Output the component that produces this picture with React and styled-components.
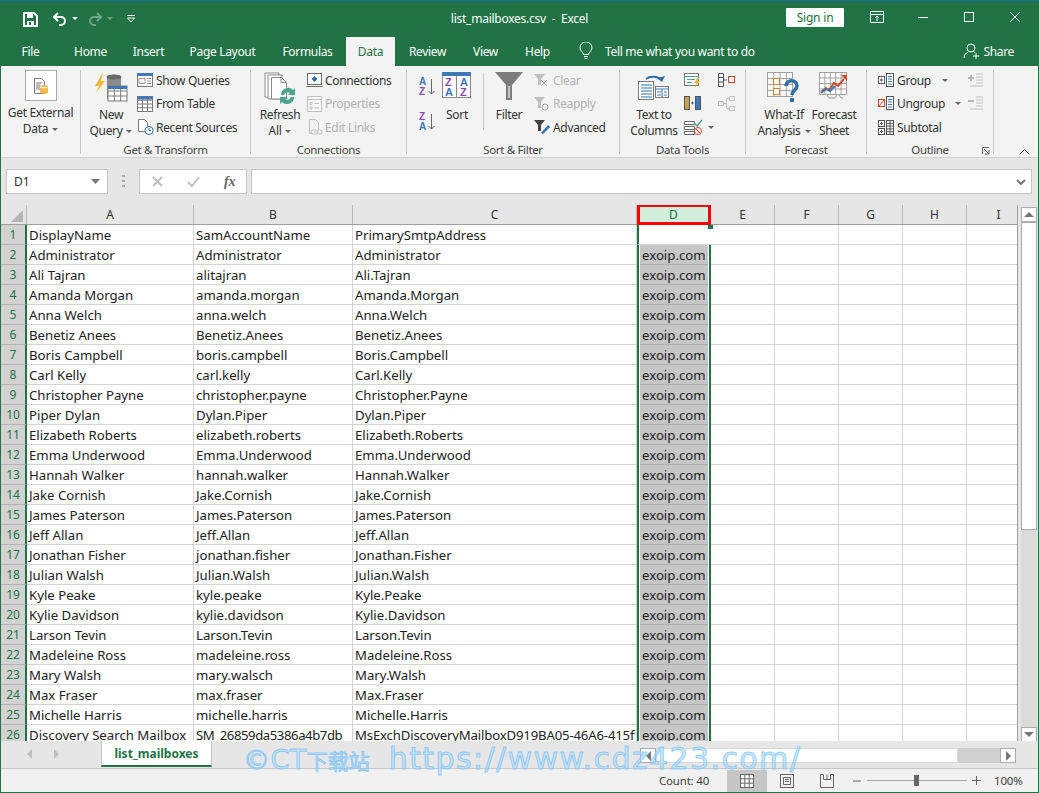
import React from 'react';
import styled, { createGlobalStyle } from 'styled-components';

const GlobalStyle = createGlobalStyle`
  html, body { margin: 0; padding: 0; background: #fff; }
  body { font-family: "Noto Sans", "Open Sans", sans-serif; }
  * { box-sizing: border-box; }
`;

const GREEN = '#217346';

// Window shell
const Window = styled.div`
  position: relative;
  width: 1039px;
  height: 793px;
  display: flex;
  flex-direction: column;
  overflow: hidden;
  border-left: 1px solid ${GREEN};
  border-right: 1px solid ${GREEN};
  border-bottom: 1px solid ${GREEN};
  background: #e6e6e6;
`;

const TitleBar = styled.div`
  height: 37px;
  flex: none;
  display: grid;
  grid-template-columns: 1fr auto 1fr;
  align-items: center;
  background: ${GREEN};
  border-top: 1px solid #1c6aa8;
  color: #fff;
`;

const QuickAccess = styled.div`
  display: flex;
  align-items: center;
  padding-left: 22px;
`;

const QatButton = styled.span`
  display: flex;
  width: ${p => p.$w}px;
  justify-content: flex-start;
  opacity: ${p => (p.$dim ? 0.35 : 1)};
`;

const WindowTitle = styled.div`
  margin-bottom: 2px;
  font-size: 12px;
  letter-spacing: -0.25px;
  white-space: pre;
`;

const WindowControls = styled.div`
  display: flex;
  justify-content: flex-end;
  align-items: center;
  margin-bottom: 4px;
`;

const SignIn = styled.button`
  width: 58px;
  height: 19px;
  margin-right: 10px;
  border: none;
  border-radius: 1px;
  background: #fff;
  color: ${GREEN};
  font: 12px "Noto Sans", sans-serif;
  letter-spacing: -0.2px;
  padding: 0;
`;

const ControlButton = styled.span`
  width: 46px;
  height: 30px;
  display: flex;
  align-items: center;
  justify-content: center;
`;

// Tabs
const TabBar = styled.div`
  height: 29px;
  flex: none;
  display: flex;
  background: ${GREEN};
  color: #fff;
  font-size: 12px;
  letter-spacing: -0.32px;
`;

const Tab = styled.div`
  width: ${p => p.$w}px;
  display: flex;
  align-items: center;
  justify-content: center;
  padding-bottom: 1px;
  background: ${p => (p.$active ? '#f3f3f3' : 'transparent')};
  color: ${p => (p.$active ? GREEN : '#fff')};
`;

const TellMe = styled.div`
  display: flex;
  align-items: center;
  gap: 12px;
  margin-left: 15px;
  padding-bottom: 1px;
`;

const Share = styled.div`
  margin-left: auto;
  margin-right: 24px;
  display: flex;
  align-items: center;
  gap: 4px;
  padding-bottom: 1px;
`;

// Ribbon
const Ribbon = styled.div`
  height: 92px;
  flex: none;
  display: flex;
  padding-top: 4px;
  background: #f3f3f3;
  border-bottom: 1px solid #d2d2d2;
  color: #333;
  font-size: 12px;
  letter-spacing: -0.33px;
`;

const Group = styled.div`
  position: relative;
  width: ${p => p.$w}px;
  height: 84px;
  flex: none;
  display: flex;
  flex-direction: column;
  border-right: 1px solid #c6c6c6;
`;

const GroupBody = styled.div`
  flex: 1;
  display: flex;
  padding-left: ${p => p.$pl || 0}px;
`;

const GroupLabel = styled.div`
  height: 14px;
  margin-bottom: -3px;
  line-height: 14px;
  text-align: center;
  font-size: 11.5px;
  color: #444;
  white-space: nowrap;
`;

const BigButton = styled.div`
  width: ${p => p.$w}px;
  flex: none;
  display: flex;
  flex-direction: column;
  align-items: center;
  margin-left: ${p => p.$ml || 0}px;
`;

const BigIcon = styled.div`
  height: ${p => p.$h || 37}px;
  display: flex;
  align-items: flex-start;
  justify-content: center;
  padding-top: ${p => p.$pt ?? 2}px;
`;

const BigLabel = styled.div`
  line-height: 16px;
  text-align: center;
  white-space: nowrap;
  color: #333;
`;

const Caret = styled.span`
  display: inline-block;
  width: 0;
  height: 0;
  margin-left: ${p => p.$ml ?? 4}px;
  vertical-align: 2px;
  border-left: 3px solid transparent;
  border-right: 3px solid transparent;
  border-top: 3px solid #666;
`;

const SmallColumn = styled.div`
  width: ${p => (p.$w ? `${p.$w}px` : 'auto')};
  flex: none;
  margin-top: -1px;
  margin-left: ${p => p.$ml || 0}px;
  display: flex;
  flex-direction: column;
`;

const SmallRow = styled.div`
  height: ${p => p.$h || 23.25}px;
  display: flex;
  align-items: center;
  gap: 2px;
  white-space: nowrap;
  color: ${p => (p.$off ? '#b1b1b1' : '#333')};
`;

const VRule = styled.div`
  width: 1px;
  height: 57px;
  margin: 3px 5px 0 8px;
  flex: none;
  background: #c6c6c6;
`;

const Launcher = styled.span`
  position: absolute;
  right: 3px;
  bottom: -1px;
  display: flex;
`;

const Collapse = styled.span`
  margin-left: 25px;
  align-self: flex-end;
  margin-bottom: 2px;
  display: flex;
`;

// Formula bar
const FormulaBar = styled.div`
  height: 47px;
  flex: none;
  display: flex;
  padding: 11px 6px 0 5px;
  background: #e6e6e6;
`;

const NameBox = styled.div`
  width: 102px;
  height: 25px;
  padding: 0 7px;
  display: flex;
  align-items: center;
  justify-content: space-between;
  background: #fff;
  border: 1px solid #c6c6c6;
  color: #333;
  font-size: 12px;
`;

const Grip = styled.span`
  width: 31px;
  height: 25px;
  display: flex;
  align-items: center;
  justify-content: center;
`;

const FxBox = styled.div`
  width: 108px;
  height: 25px;
  display: flex;
  align-items: center;
  gap: 24px;
  padding-left: 12px;
  background: #fff;
  border: 1px solid #c6c6c6;
`;

const FxGlyph = styled.span`
  font: italic bold 14px "Liberation Serif", serif;
  color: #666;
`;

const FormulaInput = styled.div`
  width: 782px;
  height: 25px;
  margin-left: 4px;
  padding-right: 5px;
  display: flex;
  align-items: center;
  justify-content: flex-end;
  background: #fff;
  border: 1px solid #c6c6c6;
`;

// Sheet
const SheetArea = styled.div`
  height: 537px;
  flex: none;
  display: flex;
  overflow: hidden;
`;

const Sheet = styled.div`
  width: 1017px;
  flex: none;
  display: flex;
  flex-direction: column;
  overflow: hidden;
  border-right: 1px solid #9f9f9f;
  border-bottom: 1px solid #9f9f9f;
`;

const COLUMNS = '26px 167px 159px 284px 74px 64px 64px 64px 64px 64px';

const HeaderRow = styled.div`
  height: 20px;
  flex: none;
  display: grid;
  grid-template-columns: ${COLUMNS};
  background: #e6e6e6;
  border-bottom: 1px solid #9f9f9f;
`;

const ColHeader = styled.div`
  position: relative;
  display: flex;
  align-items: center;
  justify-content: center;
  font-size: 12px;
  color: ${p => (p.$sel ? GREEN : '#333')};
  background: ${p => (p.$sel ? '#d2eedd' : 'transparent')};
  border-right: 1px solid ${p => (p.$sel ? 'transparent' : '#b8b8b8')};
`;

// red marker drawn over the selected column header
const HeaderMark = styled.span`
  position: absolute;
  top: -1px;
  left: 0;
  right: -1px;
  bottom: -1px;
  border: 3px solid #f00;
`;

const Corner = styled.div`
  display: flex;
  align-items: flex-end;
  justify-content: flex-end;
  padding: 0 3px 2px 0;
  border-right: 1px solid #b8b8b8;
`;

const Row = styled.div`
  height: 20px;
  flex: none;
  display: grid;
  grid-template-columns: ${COLUMNS};
  background: #fff;
`;

const RowHeader = styled.div`
  display: flex;
  align-items: center;
  justify-content: center;
  background: #d2d2d2;
  border-right: 2px solid ${GREEN};
  border-bottom: 1px solid #b4b4b4;
  color: ${GREEN};
  font-size: 12px;
`;

const Cell = styled.div`
  padding: 1px 0 0 2px;
  border-right: 1px solid #d4d4d4;
  border-bottom: 1px solid #d4d4d4;
  font-size: 13.2px;
  letter-spacing: ${p => p.$ls || 0}px;
  line-height: 19px;
  color: #222;
  white-space: nowrap;
  overflow: hidden;
`;

const SelectedCell = styled.div`
  position: relative;
  padding: 0 1px 0 1px;
  border-left: 2px solid ${GREEN};
  border-right: 2px solid ${GREEN};
  font-size: 13.2px;
  line-height: 20px;
  color: #222;
  white-space: nowrap;
`;

const SelectedFill = styled.div`
  height: 20px;
  padding: 1px 0 0 2px;
  line-height: 19px;
  background: #c6c6c6;
  border-bottom: 1px solid #aeaeae;
`;

const FirstSelectedCell = styled.div`
  position: relative;
  border-left: 2px solid ${GREEN};
  border-bottom: 1px solid #d4d4d4;
`;

const FillHandle = styled.span`
  position: absolute;
  top: 0;
  right: -2px;
  width: 5px;
  height: 4px;
  background: ${GREEN};
`;

const VScroll = styled.div`
  flex: 1;
  display: flex;
  flex-direction: column;
  padding: 2px 0 0 3px;
  background: #e6e6e6;
`;

const VTrack = styled.div`
  width: 16px;
  height: 535px;
  display: flex;
  flex-direction: column;
  background: #dbdbdb;
`;

const ScrollArrow = styled.span`
  width: ${p => p.$w || 16}px;
  height: ${p => p.$h || 15}px;
  flex: none;
  display: flex;
  align-items: center;
  justify-content: center;
  background: #fff;
  border: 1px solid #ababab;
`;

const VThumb = styled.div`
  height: 308px;
  flex: none;
  background: #fff;
  border: 1px solid #ababab;
`;

const Spacer = styled.div`
  flex: 1;
`;

// Sheet tabs
const SheetTabs = styled.div`
  height: 28px;
  flex: none;
  display: flex;
  background: #e6e6e6;
  border-bottom: 1px solid #c6c6c6;
  margin-top: -1px;
`;

const TabNav = styled.div`
  width: 100px;
  height: 25px;
  display: flex;
  align-items: center;
  gap: 22px;
  padding-left: 26px;
`;

const SheetTab = styled.div`
  width: 111px;
  height: 26px;
  flex: none;
  display: flex;
  align-items: center;
  justify-content: center;
  background: #fff;
  border-left: 1px solid #c6c6c6;
  border-right: 1px solid #c6c6c6;
  border-bottom: 2px solid ${GREEN};
  color: ${GREEN};
  font-weight: 700;
  font-size: 12px;
`;

const HScroll = styled.div`
  width: 376px;
  height: 15px;
  margin: 7px 0 0 428px;
  display: flex;
  background: #d0d0d0;
`;

const HThumb = styled.div`
  width: 302px;
  background: #fff;
  border: 1px solid #dadada;
`;

// Status bar
const StatusBar = styled.div`
  flex: 1;
  display: flex;
  align-items: center;
  background: #f1f1f1;
  font-size: 11.5px;
  letter-spacing: -0.2px;
  color: #444;
`;

const Count = styled.span`
  margin-left: 658px;
  width: 68px;
`;

const ViewButton = styled.span`
  width: 40px;
  height: 22px;
  display: flex;
  align-items: center;
  justify-content: center;
  background: ${p => (p.$active ? '#c6c6c6' : 'transparent')};
`;

const ZoomSlider = styled.div`
  display: flex;
  align-items: center;
  margin-left: 6px;
`;

const SliderTrack = styled.div`
  position: relative;
  width: 100px;
  height: 1px;
  margin: 0 5px 0 6px;
  background: #a8a8a8;
`;

const SliderThumb = styled.span`
  position: absolute;
  left: 47px;
  top: -5px;
  width: 5px;
  height: 11px;
  background: #666;
`;

const ZoomValue = styled.span`
  margin-left: 13px;
`;

const Watermark = styled.div`
  position: absolute;
  left: 242px;
  top: 741px;
  font: 30px "DejaVu Sans", "Noto Sans CJK SC", sans-serif;
  letter-spacing: 1.4px;
  white-space: pre;
  color: rgba(175, 220, 252, 0.6);
  -webkit-text-stroke: 1px rgba(125, 195, 250, 0.75);
  pointer-events: none;
`;

const WatermarkBrand = styled.span`
  font-size: 27px;
  letter-spacing: 0.5px;
`;

const WatermarkCjk = styled.span`
  font-size: 21px;
  letter-spacing: 0;
  margin-right: 8px;
`;

// Icons
const Svg = ({ w = 16, h = 16, children }) => (
  <svg width={w} height={h} viewBox={`0 0 ${w} ${h}`} fill="none" style={{ flex: 'none', display: 'block' }}>
    {children}
  </svg>
);

const TableGrid = ({ x, y, w, h, cols, rows, head = '#3f78b5', stroke = '#7a7a7a' }) => {
  const lines = [];
  for (let i = 1; i < cols; i++) lines.push(<path key={`c${i}`} d={`M${x + (w * i) / cols} ${y}v${h}`} stroke={stroke} />);
  for (let i = 1; i < rows; i++) lines.push(<path key={`r${i}`} d={`M${x} ${y + (h * i) / rows}h${w}`} stroke={stroke} />);
  return (
    <g>
      <rect x={x} y={y} width={w} height={h} fill="#fff" stroke={stroke} />
      {lines}
      {head && <rect x={x} y={y} width={w} height={3} fill={head} />}
    </g>
  );
};

const SaveIcon = () => (
  <Svg w={15} h={15}>
    <path d="M1 1h10l3 3v10H1z" stroke="#fff" strokeWidth="2" />
    <path d="M4 2h6v4H4zM4 9h7v5H4z" fill="#fff" />
    <path d="M6 10h2v3H6z" fill={GREEN} />
  </Svg>
);

const UndoIcon = () => (
  <Svg w={15} h={14}>
    <path d="M6 1 2 5l4 4" stroke="#fff" strokeWidth="2" />
    <path d="M2 5h7a4 4 0 0 1 0 8H7" stroke="#fff" strokeWidth="2" />
  </Svg>
);

const RedoIcon = () => (
  <Svg w={15} h={14}>
    <path d="M9 1l4 4-4 4" stroke="#fff" strokeWidth="2" />
    <path d="M13 5H6a4 4 0 0 0 0 8h2" stroke="#fff" strokeWidth="2" />
  </Svg>
);

const TinyCaret = () => (
  <Svg w={6} h={4}>
    <path d="M0 0h6L3 3z" fill="#fff" />
  </Svg>
);

const CustomizeIcon = () => (
  <Svg w={8} h={8}>
    <path d="M0 .5h8" stroke="#fff" />
    <path d="M.5 3h7L4 7z" stroke="#fff" />
  </Svg>
);

const RibbonDisplayIcon = () => (
  <Svg w={14} h={12}>
    <path d="M.5.5h13v11H.5zM.5 3.500h13" stroke="#fff" />
    <path d="M7 10V5M5 7l2-2 2 2" stroke="#fff" />
  </Svg>
);

const MinIcon = () => (
  <Svg w={10} h={10}>
    <path d="M0 5.500h10" stroke="#fff" />
  </Svg>
);

const MaxIcon = () => (
  <Svg w={10} h={10}>
    <rect x=".5" y=".5" width="9" height="9" stroke="#fff" />
  </Svg>
);

const CloseIcon = () => (
  <Svg w={10} h={10}>
    <path d="M0 0l10 10M10 0L0 10" stroke="#fff" />
  </Svg>
);

const BulbIcon = () => (
  <Svg w={14} h={18}>
    <path d="M4.500 12.500C4.300 10 1 9 1 5.800a6 6 0 0 1 12 0c0 3.200-3.300 4.200-3.500 6.700z" stroke="#fff" />
    <path d="M5 14.500h4M5.500 16.500h3" stroke="#fff" />
  </Svg>
);

const ShareIcon = () => (
  <Svg w={16} h={16}>
    <circle cx="8" cy="5" r="4" stroke="#fff" />
    <path d="M1 15c0-3 2-5 4-6M11 9l1 .5" stroke="#fff" />
    <path d="M10 13h6M13 10v6" stroke="#fff" />
  </Svg>
);

const Box = styled.span`
  width: 32px;
  height: 31px;
  display: flex;
  align-items: center;
  justify-content: center;
  background: #fff;
  border: 1px solid #ababab;
`;

const ExternalDataIcon = () => (
  <Box>
    <Svg w={18} h={18}>
      <path d="M2.500 1.500h7l3 3v12h-10z" fill="#fff" stroke="#7a7a7a" />
      <path d="M4 6h6M4 8h4M4 10h4M4 12h4" stroke="#7a7a7a" />
      <path d="M8 9c0-1 8-1 8 0v7c0 1-8 1-8 0z" fill="#f2b84b" />
      <path d="M8 10c1 1 7 1 8 0" stroke="#fff" />
    </Svg>
  </Box>
);

const NewQueryIcon = () => (
  <Svg w={34} h={30}>
    <path d="M9 0 1 14l4 0-3 7L11 9 7 9z" fill="#f5b93f" />
    <path d="M13 5c0-3 14-3 14 0v22H13z" fill="#8a8a8a" />
    <ellipse cx="20" cy="5" rx="7.500" ry="2.500" fill="#6a6a6a" />
    <TableGrid x={14} y={14} w={19} h={15} cols={3} rows={3} head="#3f78b5" />
  </Svg>
);

const ShowQueriesIcon = () => (
  <Svg w={17} h={15}>
    <rect x=".5" y=".5" width="15" height="13" fill="#fff" stroke="#7a7a7a" />
    <rect x="0" y="0" width="16" height="3" fill="#3f78b5" />
    <path d="M10 5.500h4M10 8h4M10 10.500h4M2 5.500h6v5H2z" stroke="#9a9a9a" />
  </Svg>
);

const FromTableIcon = () => (
  <Svg w={17} h={16}>
    <TableGrid x={.5} y={.5} w={15} h={15} cols={3} rows={4} />
  </Svg>
);

const RecentIcon = () => (
  <Svg w={17} h={16}>
    <path d="M1.500.5h6l3 3v9h-9z" fill="#fff" stroke="#7a7a7a" />
    <circle cx="12" cy="11.500" r="4" fill="#fff" stroke="#2f6ea8" />
    <path d="M12 9v2.500h2" stroke="#2f6ea8" />
  </Svg>
);

const RefreshIcon = () => (
  <Svg w={32} h={32}>
    <path d="M1 1h14v24H1z" fill="#fff" stroke="#8a8a8a" />
    <path d="M4 3h14v24H4z" fill="#fff" stroke="#8a8a8a" />
    <path d="M7.500 5.500h10l5 5V27h-15z" fill="#fff" stroke="#8a8a8a" />
    <path d="M17 5.500v5h5" stroke="#8a8a8a" />
    <path d="M17 23a7 7 0 0 1 12-5l2-2v7h-7l2-2a4 4 0 0 0-6 2z" fill="#4ea58d" />
    <path d="M30 25a7 7 0 0 1-12 5l-2 2v-7h7l-2 2a4 4 0 0 0 6-2z" fill="#4ea58d" />
  </Svg>
);

const ConnectionsIcon = () => (
  <Svg w={17} h={15}>
    <rect x="1.500" y=".5" width="14" height="11" fill="#fff" stroke="#6a6a6a" />
    <path d="M.5 13.500h16" stroke="#6a6a6a" />
    <path d="M8.500 3l3 3-3 3-3-3z" fill="#2f6ea8" />
  </Svg>
);

const PropertiesIcon = () => (
  <Svg w={17} h={16}>
    <rect x="1.500" y=".5" width="14" height="15" fill="#f8f8f8" stroke="#c0c0c0" />
    <path d="M1.500 3.500h14M4 6.500h2v2H4zM4 11h2v2H4zM8 7.500h5M8 12h5" stroke="#c0c0c0" />
  </Svg>
);

const EditLinksIcon = () => (
  <Svg w={17} h={16}>
    <path d="M3.500.5h6l3 3v7M3.500.5v14h3" stroke="#c0c0c0" />
    <path d="M8 13h3M7 11h3a2 2 0 0 1 0 4H7a2 2 0 0 1 0-4zM12 11h2a2 2 0 0 1 0 4h-2" stroke="#c0c0c0" />
  </Svg>
);

const SortSmallIcon = ({ top, bottom, topColor, bottomColor }) => (
  <Svg w={16} h={24}>
    <text x="0" y="10" fontSize="10" fontWeight="700" fontFamily="Liberation Sans, sans-serif" fill={topColor}>{top}</text>
    <text x="0" y="20" fontSize="10" fontWeight="700" fontFamily="Liberation Sans, sans-serif" fill={bottomColor}>{bottom}</text>
    <path d="M12.500 4v15M9.500 16l3 3 3-3" stroke="#666" />
  </Svg>
);

const SortIcon = () => (
  <Svg w={30} h={27}>
    <rect x=".5" y=".5" width="28" height="25" fill="#fff" stroke="#8a8a8a" />
    <rect x="0" y="0" width="29" height="4" fill="#3f78b5" />
    <path d="M14.500 4v22" stroke="#8a8a8a" />
    <text x="3" y="14" fontSize="11" fontWeight="700" fontFamily="Liberation Sans, sans-serif" fill="#8a4fb0">Z</text>
    <text x="3" y="24" fontSize="11" fontWeight="700" fontFamily="Liberation Sans, sans-serif" fill="#3f78b5">A</text>
    <text x="18" y="14" fontSize="11" fontWeight="700" fontFamily="Liberation Sans, sans-serif" fill="#3f78b5">A</text>
    <text x="18" y="24" fontSize="11" fontWeight="700" fontFamily="Liberation Sans, sans-serif" fill="#8a4fb0">Z</text>
  </Svg>
);

const FilterIcon = () => (
  <Svg w={28} h={28}>
    <path d="M0 0h28L17 13v15h-6V13z" fill="#7d7d7d" />
    <path d="M13 14h2v12h-2z" fill="#c8c8c8" />
  </Svg>
);

const SmallFilter = ({ color, children }) => (
  <Svg w={17} h={16}>
    <path d="M0 1h11L7 6v6H4V6z" fill={color} />
    {children}
  </Svg>
);

const TextColumnsIcon = () => (
  <Svg w={32} h={28}>
    <path d="M8 7a9 6 0 0 1 15 1" stroke="#2f6ea8" strokeWidth="2" />
    <path d="M19 6l5 4 3-6z" fill="#2f6ea8" />
    <rect x=".5" y="9.500" width="15" height="18" fill="#fff" stroke="#7a7a7a" />
    <path d="M3 13h11M3 16h11M3 19h11M3 22h11M3 25h11" stroke="#2f6ea8" />
    <rect x="17.500" y="14.500" width="13" height="11" fill="#fff" stroke="#7a7a7a" />
    <path d="M17.500 17h13M24 17v8M19 20h4M26 20h3M19 23h4M26 23h3" stroke="#3f78b5" />
  </Svg>
);

const FlashFillIcon = () => (
  <Svg w={17} h={15}>
    <rect x=".5" y=".5" width="14" height="12" fill="#fff" stroke="#7a7a7a" />
    <path d="M.5 3.500h14M3 6.500h8M3 9.500h5" stroke="#4ea58d" />
    <path d="M13 5l-3 5h2l-1 5 5-7h-2l1-3z" fill="#f2b84b" />
  </Svg>
);

const RemoveDupIcon = () => (
  <Svg w={17} h={15}>
    <rect x=".5" y=".5" width="5" height="13" fill="#c8a24a" stroke="#555" />
    <rect x="11.500" y=".5" width="5" height="13" fill="#3f78b5" stroke="#555" />
    <path d="M7 7h3M8.500 5.500v3" stroke="#2f6ea8" />
  </Svg>
);

const ValidationIcon = () => (
  <Svg w={20} h={16}>
    <path d="M.5 2.500h10v3H.5zM.5 7.500h10v3H.5zM.5 12.500h10v3H.5z" fill="#fff" stroke="#666" />
    <path d="M10 4l3 3 5-6" stroke="#4ea58d" strokeWidth="1.500" />
    <circle cx="14" cy="12" r="3.500" fill="#fff" stroke="#d0492a" />
    <path d="M12 10l4 4" stroke="#d0492a" />
  </Svg>
);

const ConsolidateIcon = () => (
  <Svg w={17} h={15}>
    <path d="M.5.5h5v13h-5zM.5 4.500h5M.5 9h5" stroke="#555" />
    <path d="M6 7h3" stroke="#2f6ea8" />
    <rect x="10.500" y="3.500" width="6" height="6" stroke="#d0492a" />
  </Svg>
);

const RelationsIcon = () => (
  <Svg w={17} h={15}>
    <path d="M.5 5.500h5v4h-5zM11.500.5h5v4h-5zM11.500 10.500h5v4h-5zM5.500 7.500h3M8.500 2.500v10M8.500 2.500h3M8.500 12.500h3" stroke="#bdbdbd" />
  </Svg>
);

const WhatIfIcon = () => (
  <Svg w={34} h={32}>
    <TableGrid x={.5} y={.5} w={25} h={24} cols={4} rows={4} head={null} stroke="#a0a0a0" />
    <rect x="6.500" y="6.500" width="6" height="6" fill="#fff" stroke="#d9822b" />
    <rect x="6.500" y="16.500" width="6" height="6" fill="#fff" stroke="#d9822b" />
    <path d="M19 14c0-7 11-7 11 0 0 4-5 4-5 9" stroke="#2f6ea8" strokeWidth="3.500" />
    <rect x="23" y="26" width="4" height="4" fill="#2f6ea8" />
  </Svg>
);

const ForecastIcon = () => (
  <Svg w={30} h={28}>
    <TableGrid x={.5} y={.5} w={27} h={22} cols={5} rows={4} head={null} stroke="#a0a0a0" />
    <path d="M2 20l5-4 3 2 5-7 4 3 6-7" stroke="#d0492a" strokeWidth="2" />
    <path d="M2 21l5-4 4 2 5-5" stroke="#3f78b5" strokeWidth="2" />
    <path d="M22 3h6v6z" fill="#d0492a" />
    <path d="M8 23l2 3h6l2-3M20 23l2 3h2" stroke="#999" />
  </Svg>
);

const GroupIcon = ({ off }) => (
  <Svg w={17} h={15}>
    <rect x=".5" y="3.500" width="6" height="7" fill="#fff" stroke={off ? '#d0492a' : '#555'} />
    {off ? <path d="M1 10l5-6" stroke="#d0492a" /> : <path d="M2 7h3M3.500 5.500v3" stroke="#555" />}
    <rect x="8.500" y=".5" width="7" height="13" fill="#fff" stroke="#555" />
    <path d="M10 3.500h4M10 6h4M10 8.500h4M10 11h4" stroke="#3f78b5" />
  </Svg>
);

const SubtotalIcon = () => (
  <Svg w={17} h={15}>
    <rect x=".5" y=".5" width="6" height="6" fill="#fff" stroke="#555" />
    <rect x=".5" y="8.500" width="6" height="6" fill="#fff" stroke="#555" />
    <path d="M2 3.500h3M3.500 2v3M2 11.500h3M3.500 10v3" stroke="#555" />
    <TableGrid x={8.500} y={.5} w={7} h={14} cols={2} rows={5} head={null} stroke="#555" />
  </Svg>
);

const DetailIcon = ({ minus }) => (
  <Svg w={16} h={15}>
    <path d={minus ? 'M0 5h6' : 'M0 5h6M3 2v6'} stroke="#b5b5b5" strokeWidth="2" />
    <path d="M8 1h7M8 4h7M8 7h7M8 10h7M2 13h13" stroke="#c0c0c0" />
  </Svg>
);

const LauncherIcon = () => (
  <Svg w={8} h={8}>
    <path d="M.5 7V.5H7M2 2l5 5M7 3v4H3" stroke="#666" />
  </Svg>
);

const CollapseIcon = () => (
  <Svg w={11} h={6}>
    <path d="M.5 5.500 5.500.5l5 5" stroke="#666" />
  </Svg>
);

const ChevronDown = ({ color = '#777' }) => (
  <Svg w={10} h={6}>
    <path d="M1 1l4 4 4-4" stroke={color} strokeWidth="2" />
  </Svg>
);

const FieldCaret = () => (
  <Svg w={9} h={5}>
    <path d="M0 0h9L4.500 5z" fill="#777" />
  </Svg>
);

const GripIcon = () => (
  <Svg w={3} h={13}>
    <path d="M0 1h3M0 6h3M0 11h3" stroke="#aaa" strokeWidth="2" />
  </Svg>
);

const CrossIcon = () => (
  <Svg w={11} h={11}>
    <path d="M1 1l9 9M10 1l-9 9" stroke="#c0c0c0" strokeWidth="2" />
  </Svg>
);

const CheckIcon = () => (
  <Svg w={13} h={11}>
    <path d="M1 6l4 4 7-9" stroke="#c0c0c0" strokeWidth="2" />
  </Svg>
);

const CornerIcon = () => (
  <Svg w={12} h={12}>
    <path d="M12 0v12H0z" fill="#b5b5b5" />
  </Svg>
);

const Arrow = ({ dir, color = '#777' }) => {
  const paths = { up: 'M0 5 5 0l5 5z', down: 'M0 0h10L5 5z', left: 'M5 0v10L0 5z', right: 'M0 0v10l5-5z' };
  const vertical = dir === 'up' || dir === 'down';
  return (
    <Svg w={vertical ? 10 : 5} h={vertical ? 5 : 10}>
      <path d={paths[dir]} fill={color} />
    </Svg>
  );
};

const NormalViewIcon = () => (
  <Svg w={14} h={14}>
    <TableGrid x={.5} y={.5} w={13} h={13} cols={3} rows={3} head={null} stroke="#666" />
  </Svg>
);

const PageLayoutIcon = () => (
  <Svg w={14} h={14}>
    <rect x=".5" y=".5" width="13" height="13" stroke="#666" />
    <path d="M3.500 3.500h7v7h-7zM5 5.500h4M5 7.500h4" stroke="#666" />
  </Svg>
);

const PageBreakIcon = () => (
  <Svg w={14} h={14}>
    <path d="M.5.5v13h13V.5M.5.5h3v5h7v-5h3M7 .5v5" stroke="#666" />
  </Svg>
);

const people = [
  ['DisplayName', 'SamAccountName', 'PrimarySmtpAddress'],
  ['Administrator', 'Administrator', 'Administrator'],
  ['Ali Tajran', 'alitajran', 'Ali.Tajran'],
  ['Amanda Morgan', 'amanda.morgan', 'Amanda.Morgan'],
  ['Anna Welch', 'anna.welch', 'Anna.Welch'],
  ['Benetiz Anees', 'Benetiz.Anees', 'Benetiz.Anees'],
  ['Boris Campbell', 'boris.campbell', 'Boris.Campbell'],
  ['Carl Kelly', 'carl.kelly', 'Carl.Kelly'],
  ['Christopher Payne', 'christopher.payne', 'Christopher.Payne'],
  ['Piper Dylan', 'Dylan.Piper', 'Dylan.Piper'],
  ['Elizabeth Roberts', 'elizabeth.roberts', 'Elizabeth.Roberts'],
  ['Emma Underwood', 'Emma.Underwood', 'Emma.Underwood'],
  ['Hannah Walker', 'hannah.walker', 'Hannah.Walker'],
  ['Jake Cornish', 'Jake.Cornish', 'Jake.Cornish'],
  ['James Paterson', 'James.Paterson', 'James.Paterson'],
  ['Jeff Allan', 'Jeff.Allan', 'Jeff.Allan'],
  ['Jonathan Fisher', 'jonathan.fisher', 'Jonathan.Fisher'],
  ['Julian Walsh', 'Julian.Walsh', 'Julian.Walsh'],
  ['Kyle Peake', 'kyle.peake', 'Kyle.Peake'],
  ['Kylie Davidson', 'kylie.davidson', 'Kylie.Davidson'],
  ['Larson Tevin', 'Larson.Tevin', 'Larson.Tevin'],
  ['Madeleine Ross', 'madeleine.ross', 'Madeleine.Ross'],
  ['Mary Walsh', 'mary.walsch', 'Mary.Walsh'],
  ['Max Fraser', 'max.fraser', 'Max.Fraser'],
  ['Michelle Harris', 'michelle.harris', 'Michelle.Harris'],
  ['Discovery Search Mailbox', 'SM_26859da5386a4b7db', 'MsExchDiscoveryMailboxD919BA05-46A6-415f'],
];

// the long ids in the last row need tighter spacing to fit their columns
const LONG_ROW_SPACING = [0, -0.45, -0.18];

const tabs = [
  ['File', 59], ['Home', 61], ['Insert', 55], ['Page Layout', 93], ['Formulas', 77],
  ['Data', 49], ['Review', 65], ['View', 51], ['Help', 53],
];

const App = () => (
  <Window>
    <GlobalStyle />
    <TitleBar>
      <QuickAccess>
        <QatButton $w={29}><SaveIcon /></QatButton>
        <QatButton $w={20}><UndoIcon /></QatButton>
        <QatButton $w={16}><TinyCaret /></QatButton>
        <QatButton $w={19} $dim><RedoIcon /></QatButton>
        <QatButton $w={20} $dim><TinyCaret /></QatButton>
        <QatButton $w={10}><CustomizeIcon /></QatButton>
      </QuickAccess>
      <WindowTitle>list_mailboxes.csv  -  Excel</WindowTitle>
      <WindowControls>
        <SignIn>Sign in</SignIn>
        <ControlButton><RibbonDisplayIcon /></ControlButton>
        <ControlButton><MinIcon /></ControlButton>
        <ControlButton><MaxIcon /></ControlButton>
        <ControlButton><CloseIcon /></ControlButton>
      </WindowControls>
    </TitleBar>

    <TabBar>
      {tabs.map(([name, w]) => (
        <Tab key={name} $w={w} $active={name === 'Data'}>{name}</Tab>
      ))}
      <TellMe><BulbIcon />Tell me what you want to do</TellMe>
      <Share><ShareIcon />Share</Share>
    </TabBar>

    <Ribbon>
      <Group $w={80}>
        <GroupBody>
          <BigButton $w={79}>
            <BigIcon $h={35} $pt={0}><ExternalDataIcon /></BigIcon>
            <BigLabel>Get External<br />Data<Caret /></BigLabel>
          </BigButton>
        </GroupBody>
      </Group>

      <Group $w={170}>
        <GroupBody $pl={6}>
          <BigButton $w={48}>
            <BigIcon><NewQueryIcon /></BigIcon>
            <BigLabel>New<br />Query<Caret /></BigLabel>
          </BigButton>
          <SmallColumn $ml={2}>
            <SmallRow><ShowQueriesIcon />Show Queries</SmallRow>
            <SmallRow><FromTableIcon />From Table</SmallRow>
            <SmallRow><RecentIcon />Recent Sources</SmallRow>
          </SmallColumn>
        </GroupBody>
        <GroupLabel>Get &amp; Transform</GroupLabel>
      </Group>

      <Group $w={156}>
        <GroupBody $pl={5}>
          <BigButton $w={48}>
            <BigIcon><RefreshIcon /></BigIcon>
            <BigLabel>Refresh<br />All<Caret /></BigLabel>
          </BigButton>
          <SmallColumn $ml={2}>
            <SmallRow><ConnectionsIcon />Connections</SmallRow>
            <SmallRow $off><PropertiesIcon />Properties</SmallRow>
            <SmallRow $off><EditLinksIcon />Edit Links</SmallRow>
          </SmallColumn>
        </GroupBody>
        <GroupLabel>Connections</GroupLabel>
      </Group>

      <Group $w={213}>
        <GroupBody $pl={12}>
          <SmallColumn $w={20}>
            <SmallRow $h={35}><SortSmallIcon top="A" bottom="Z" topColor="#3f78b5" bottomColor="#8a4fb0" /></SmallRow>
            <SmallRow $h={35}><SortSmallIcon top="Z" bottom="A" topColor="#8a4fb0" bottomColor="#3f78b5" /></SmallRow>
          </SmallColumn>
          <BigButton $w={36}>
            <BigIcon><SortIcon /></BigIcon>
            <BigLabel>Sort</BigLabel>
          </BigButton>
          <VRule />
          <BigButton $w={40}>
            <BigIcon><FilterIcon /></BigIcon>
            <BigLabel>Filter</BigLabel>
          </BigButton>
          <SmallColumn $ml={5}>
            <SmallRow $off>
              <SmallFilter color="#c0c0c0"><path d="M7 7l6 6M13 7l-6 6" stroke="#a8a8a8" /></SmallFilter>Clear
            </SmallRow>
            <SmallRow $off>
              <SmallFilter color="#c0c0c0"><circle cx="11" cy="11" r="3" stroke="#a8a8a8" /></SmallFilter>Reapply
            </SmallRow>
            <SmallRow>
              <SmallFilter color="#444"><path d="M7 14l7-8 2 2-7 7z" fill="#2f6ea8" /></SmallFilter>Advanced
            </SmallRow>
          </SmallColumn>
        </GroupBody>
        <GroupLabel>Sort &amp; Filter</GroupLabel>
      </Group>

      <Group $w={126}>
        <GroupBody $pl={4}>
          <BigButton $w={60}>
            <BigIcon><TextColumnsIcon /></BigIcon>
            <BigLabel>Text to<br />Columns</BigLabel>
          </BigButton>
          <SmallColumn $w={34}>
            <SmallRow><FlashFillIcon /></SmallRow>
            <SmallRow><RemoveDupIcon /></SmallRow>
            <SmallRow><ValidationIcon /><Caret $ml={2} /></SmallRow>
          </SmallColumn>
          <SmallColumn>
            <SmallRow><ConsolidateIcon /></SmallRow>
            <SmallRow><RelationsIcon /></SmallRow>
          </SmallColumn>
        </GroupBody>
        <GroupLabel>Data Tools</GroupLabel>
      </Group>

      <Group $w={121}>
        <GroupBody $pl={12}>
          <BigButton $w={52}>
            <BigIcon><WhatIfIcon /></BigIcon>
            <BigLabel>What-If<br />Analysis<Caret /></BigLabel>
          </BigButton>
          <BigButton $w={48}>
            <BigIcon><ForecastIcon /></BigIcon>
            <BigLabel>Forecast<br />Sheet</BigLabel>
          </BigButton>
        </GroupBody>
        <GroupLabel>Forecast</GroupLabel>
      </Group>

      <Group $w={127}>
        <GroupBody $pl={11}>
          <SmallColumn $w={90}>
            <SmallRow><GroupIcon />Group<Caret $ml={9} /></SmallRow>
            <SmallRow><GroupIcon off />Ungroup<Caret $ml={8} /></SmallRow>
            <SmallRow><SubtotalIcon />Subtotal</SmallRow>
          </SmallColumn>
          <SmallColumn>
            <SmallRow><DetailIcon /></SmallRow>
            <SmallRow><DetailIcon minus /></SmallRow>
          </SmallColumn>
        </GroupBody>
        <GroupLabel>Outline</GroupLabel>
        <Launcher><LauncherIcon /></Launcher>
      </Group>

      <Collapse><CollapseIcon /></Collapse>
    </Ribbon>

    <FormulaBar>
      <NameBox>D1<FieldCaret /></NameBox>
      <Grip><GripIcon /></Grip>
      <FxBox>
        <CrossIcon />
        <CheckIcon />
        <FxGlyph>fx</FxGlyph>
      </FxBox>
      <FormulaInput><ChevronDown /></FormulaInput>
    </FormulaBar>

    <SheetArea>
      <Sheet>
        <HeaderRow>
          <Corner><CornerIcon /></Corner>
          {['A', 'B', 'C', 'D', 'E', 'F', 'G', 'H', 'I'].map(col => (
            <ColHeader key={col} $sel={col === 'D'}>
              {col}
              {col === 'D' && <HeaderMark />}
            </ColHeader>
          ))}
        </HeaderRow>
        {people.map((person, i) => (
          <Row key={i}>
            <RowHeader>{i + 1}</RowHeader>
            {person.map((value, c) => (
              <Cell key={c} $ls={i === people.length - 1 ? LONG_ROW_SPACING[c] : 0}>{value}</Cell>
            ))}
            {i === 0 ? (
              <FirstSelectedCell><FillHandle /></FirstSelectedCell>
            ) : (
              <SelectedCell><SelectedFill>exoip.com</SelectedFill></SelectedCell>
            )}
            <Cell /><Cell /><Cell /><Cell /><Cell />
          </Row>
        ))}
      </Sheet>
      <VScroll>
        <VTrack>
          <ScrollArrow><Arrow dir="up" /></ScrollArrow>
          <VThumb />
          <Spacer />
          <ScrollArrow><Arrow dir="down" /></ScrollArrow>
        </VTrack>
      </VScroll>
    </SheetArea>

    <SheetTabs>
      <TabNav>
        <Arrow dir="left" color="#c0c0c0" />
        <Arrow dir="right" color="#c0c0c0" />
      </TabNav>
      <SheetTab>list_mailboxes</SheetTab>
      <HScroll>
        <ScrollArrow><Arrow dir="left" /></ScrollArrow>
        <HThumb />
        <Spacer />
        <ScrollArrow><Arrow dir="right" /></ScrollArrow>
      </HScroll>
    </SheetTabs>

    <StatusBar>
      <Count>Count: 40</Count>
      <ViewButton $active><NormalViewIcon /></ViewButton>
      <ViewButton><PageLayoutIcon /></ViewButton>
      <ViewButton><PageBreakIcon /></ViewButton>
      <ZoomSlider>
        <Svg w={8} h={8}><path d="M0 4h8" stroke="#666" /></Svg>
        <SliderTrack><SliderThumb /></SliderTrack>
        <Svg w={9} h={9}><path d="M0 4.500h9M4.500 0v9" stroke="#666" /></Svg>
      </ZoomSlider>
      <ZoomValue>100%</ZoomValue>
    </StatusBar>

    <Watermark><WatermarkBrand>©CT</WatermarkBrand><WatermarkCjk>下载站</WatermarkCjk> https://www.cdz423.com/</Watermark>
  </Window>
);

export default App;
